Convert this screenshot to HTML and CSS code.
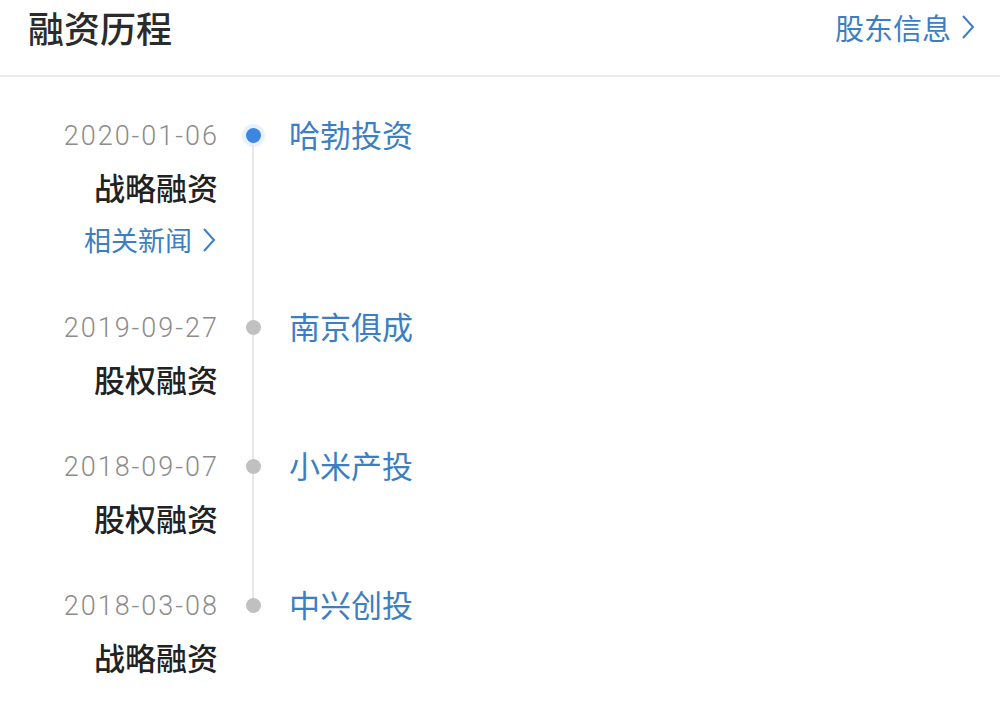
FILE: index.html
```html
<!DOCTYPE html>
<html lang="zh-CN">
<head>
    <meta charset="UTF-8">
    <title>融资历程</title>
    <meta name="viewport" content="width=device-width, initial-scale=1.0">
    <link rel="stylesheet" href="styles.css">
</head>
<body>
    <div class="section">
        <div class="section-head">
            <h2>融资历程</h2>
            <a class="more" href="#">股东信息
                <svg class="chevron" viewBox="0 0 14 26"><path d="M2 2 L12 13 L2 24"/></svg>
            </a>
        </div>

        <ul class="timeline">
            <li class="event current">
                <div class="meta">
                    <div class="date">2020-01-06</div>
                    <div class="round">战略融资</div>
                    <a class="news" href="#">相关新闻
                        <svg class="chevron" viewBox="0 0 14 26"><path d="M2 2 L12 13 L2 24"/></svg>
                    </a>
                </div>
                <div class="axis"><span class="dot"></span><span class="line"></span></div>
                <div class="investor">哈勃投资</div>
            </li>
            <li class="event">
                <div class="meta">
                    <div class="date">2019-09-27</div>
                    <div class="round">股权融资</div>
                </div>
                <div class="axis"><span class="dot"></span><span class="line"></span></div>
                <div class="investor">南京俱成</div>
            </li>
            <li class="event">
                <div class="meta">
                    <div class="date">2018-09-07</div>
                    <div class="round">股权融资</div>
                </div>
                <div class="axis"><span class="dot"></span><span class="line"></span></div>
                <div class="investor">小米产投</div>
            </li>
            <li class="event">
                <div class="meta">
                    <div class="date">2018-03-08</div>
                    <div class="round">战略融资</div>
                </div>
                <div class="axis"><span class="dot"></span></div>
                <div class="investor">中兴创投</div>
            </li>
        </ul>
    </div>
</body>
</html>
```

FILE: styles.css
```css
body {
    margin: 0;
    background: #fff;
    font-family: "Noto Sans CJK SC", "Noto Sans", sans-serif;
}

a {
    text-decoration: none;
}

.section-head {
    display: flex;
    align-items: center;
    justify-content: space-between;
    padding: 0 25px 21px 28px;
    border-bottom: 2px solid #ececec;
    margin-bottom: 30px;
}

.section-head h2 {
    margin: 0;
    font-size: 36px;
    font-weight: 500;
    color: #2b2b2b;
    line-height: 54px;
}

.more {
    display: flex;
    align-items: center;
    gap: 10px;
    font-size: 29px;
    color: #3b7fc2;
}

.chevron {
    width: 14px;
    height: 26px;
    fill: none;
    stroke: currentColor;
    stroke-width: 2;
}

.timeline {
    list-style: none;
    margin: 0;
    padding: 0;
}

.event {
    display: grid;
    grid-template-columns: 218px 70px 1fr;
}

.meta {
    display: flex;
    flex-direction: column;
    align-items: flex-end;
    padding-bottom: 33px;
}

.event:last-child .meta {
    padding-bottom: 0;
}

.date,
.round,
.news,
.investor {
    height: 53px;
    line-height: 53px;
}

.date {
    box-sizing: border-box;
    padding-top: 5px;
    line-height: 48px;
    font-family: Roboto, "Noto Sans", sans-serif;
    font-size: 27px;
    font-weight: 300;
    color: #8c8c8c;
    letter-spacing: 2px;
    margin-right: -1px;
}

.round {
    font-size: 31px;
    font-weight: 500;
    color: #222;
}

.news {
    display: flex;
    align-items: center;
    gap: 10px;
    font-size: 27px;
    color: #3b7fc2;
    padding-right: 2px;
}

/* the rail runs through every dot, from the first dot down to the last */
.axis {
    display: flex;
    flex-direction: column;
    align-items: center;
}

.axis::before {
    content: "";
    width: 2px;
    height: 21px;
    flex: none;
    background: #e8e8e8;
}

.event:first-child .axis::before {
    background: transparent;
}

.dot {
    width: 15px;
    height: 15px;
    border-radius: 50%;
    background: #c0c0c0;
    flex: none;
}

.current .dot {
    background: #3d86e0;
    box-shadow: 0 0 0 4px #e9f2fc;
}

.line {
    flex: 1;
    width: 2px;
    background: #e8e8e8;
}

.investor {
    font-size: 31px;
    color: #3b7fc2;
    padding-left: 1px;
}
```
